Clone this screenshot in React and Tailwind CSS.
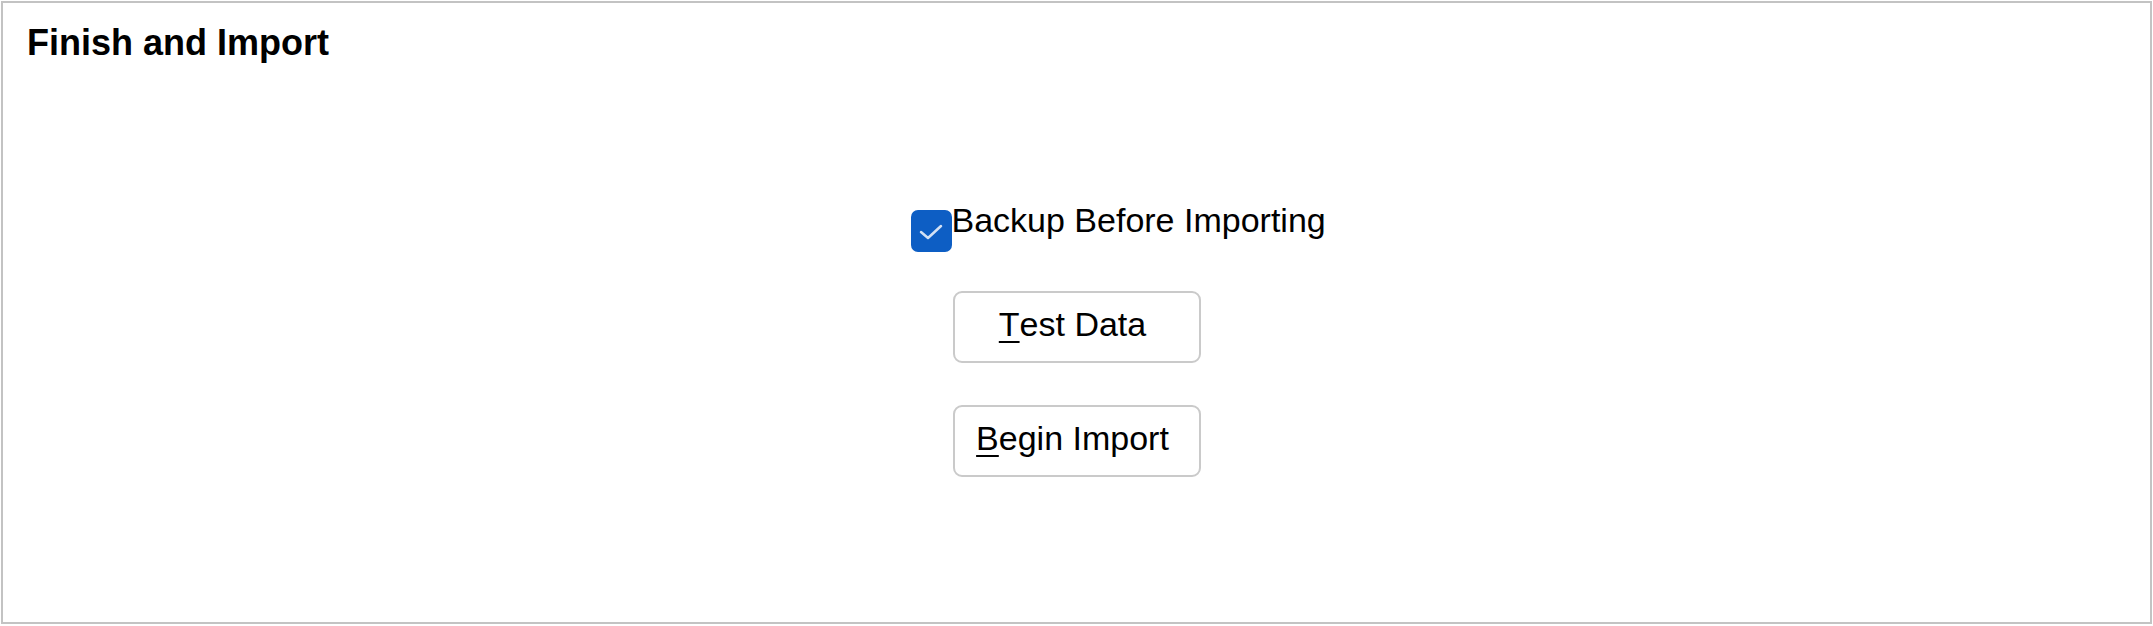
import React, { useState } from 'react';

const ImportButton = ({ hotkey, rest, onClick }) => {
  return (
    <button
      onClick={onClick}
      className="w-[248px] h-[72px] flex items-center justify-center pb-[6px] pr-[8px] bg-white border-2 border-[#cacaca] rounded-[9px] text-[34px] leading-none text-black"
    >
      <span className="underline decoration-2 underline-offset-[5px]">{hotkey}</span>
      <span>{rest}</span>
    </button>
  );
};

const App = () => {
  const [backup, setBackup] = useState(true);

  return (
    <div className="w-[2153px] h-[626px] bg-white pt-px pl-px font-['Liberation_Sans',Arial,sans-serif]">
      <div className="w-[2151px] h-[623px] border-2 border-[#c3c3c3] flex flex-col">
        <h2 className="pl-[24px] pt-[22px] text-[36px] leading-none font-bold text-black">Finish and Import</h2>

        <div className="flex justify-center mt-[142px]">
          <div className="w-[248px] flex flex-col">
            <label className="-ml-[42px] flex items-start whitespace-nowrap cursor-pointer">
              <button
                onClick={() => setBackup(!backup)}
                className={
                  backup
                    ? 'mt-[7px] w-[41px] h-[42px] rounded-[7px] bg-[#0d5ec4] flex items-center justify-center shrink-0'
                    : 'mt-[7px] w-[41px] h-[42px] rounded-[7px] bg-white border-2 border-[#777] shrink-0'
                }
              >
                {backup && (
                  <svg width="41" height="42" viewBox="0 0 41 42">
                    <polyline
                      points="10,22 17,28 30,16"
                      fill="none"
                      stroke="#d3e1f4"
                      strokeWidth="2.5"
                      strokeLinecap="round"
                      strokeLinejoin="round"
                    />
                  </svg>
                )}
              </button>
              <span className="text-[34px] leading-none text-black">Backup Before Importing</span>
            </label>

            <div className="mt-[39px] flex flex-col gap-[42px]">
              <ImportButton hotkey="T" rest="est Data" />
              <ImportButton hotkey="B" rest="egin Import" />
            </div>
          </div>
        </div>
      </div>
    </div>
  );
};

export default App;
